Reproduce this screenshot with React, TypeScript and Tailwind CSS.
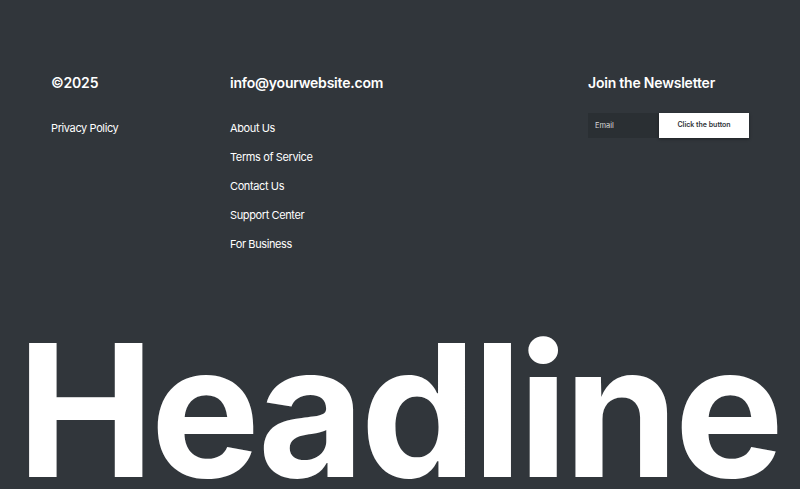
import React from 'react';

const links = ['About Us', 'Terms of Service', 'Contact Us', 'Support Center', 'For Business'];

export default function App() {
  return (
    <div className="h-[489px] overflow-hidden bg-[#31363b] text-white font-['Inter',sans-serif]">
      <div className="flex px-[51px] pt-[73px]">
        <div className="w-[179px]">
          <h3 className="text-[14px] leading-[20px] font-semibold tracking-[-0.015em]">©2025</h3>
          <div className="mt-[21px] text-[11px] leading-[29px] tracking-[-0.035em]">Privacy Policy</div>
        </div>
        <div className="w-[358px]">
          <h3 className="text-[14px] leading-[20px] font-semibold tracking-[-0.015em]">info@yourwebsite.com</h3>
          <ul className="mt-[21px] text-[11px] leading-[29px] tracking-[-0.035em]">
            {links.map((l) => (
              <li key={l}>{l}</li>
            ))}
          </ul>
        </div>
        <div>
          <h3 className="text-[14px] leading-[20px] font-semibold tracking-[-0.015em]">Join the Newsletter</h3>
          <div className="mt-[20px] flex h-[25px]">
            <input
              type="text"
              placeholder="Email"
              className="w-[71px] bg-[#2a2f33] px-[7px] text-[7.5px] text-white placeholder:text-[#d8d8d8] outline-none"
            />
            <button className="w-[90px] bg-white text-[7px] font-semibold text-[#2f3338] shadow-[0_1px_3px_rgba(0,0,0,0.4)]">
              Click the button
            </button>
          </div>
        </div>
      </div>
      <div className="mt-[78px] pl-[17px]">
        <h1 className="text-[184px] leading-[0.8] font-bold tracking-[-0.022em] whitespace-nowrap">Headline</h1>
      </div>
    </div>
  );
}
